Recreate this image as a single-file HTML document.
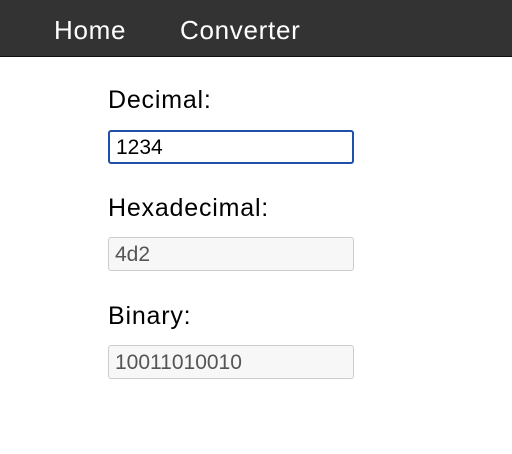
<!DOCTYPE html><html><head><style>
body{margin:0;width:512px;height:454px;background:#fff;font-family:"Liberation Sans",sans-serif;overflow:hidden;position:relative}
.nav{position:absolute;left:0;top:0;width:512px;height:56px;background:#333;border-bottom:1px solid #111}
.nav span{position:absolute;top:15px;color:#fff;font-size:26px;letter-spacing:0.7px}
.lbl{position:absolute;left:108px;font-size:25px;letter-spacing:0.8px;color:#000}
.in{position:absolute;left:108px;width:246px;height:34px;box-sizing:border-box;border:1px solid #ccc;border-radius:3px;background:#f7f7f7;font-size:21px;color:#555;padding:5px 0 0 6px}
</style></head><body>
<div class="nav"><span style="left:54px">Home</span><span style="left:180px">Converter</span></div>
<div class="lbl" style="top:86px">Decimal:</div>
<div class="in" style="top:130px;border:2px solid #1f4fa8;background:#fff;color:#000;padding:4px 0 0 6px">1234</div>
<div class="lbl" style="top:194px">Hexadecimal:</div>
<div class="in" style="top:237px">4d2</div>
<div class="lbl" style="top:302px">Binary:</div>
<div class="in" style="top:345px">10011010010</div>
</body></html>
